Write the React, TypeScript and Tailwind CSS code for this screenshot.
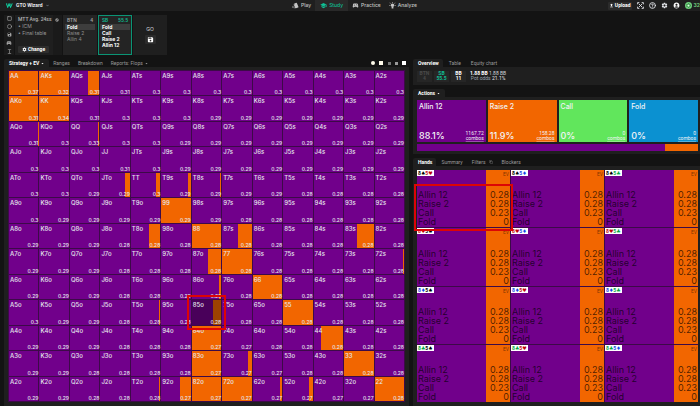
import { FC, ReactNode } from 'react';
import { Circle, CircleHelp, Copy, Square } from 'lucide-react';
import { MdAccountCircle, MdArrowDropDown, MdExpandMore, MdFileUpload, MdSave, MdSettings, MdSportsEsports, MdStyle, MdSchool, MdSwapHorizontalCircle } from 'react-icons/md';

const RANKS = 'AKQJT98765432'.split('');

// EV per hand, one line per matrix row
const EV_ROWS = [
    '.37 .32 .31 .31 .3 .3 .3 .3 .3 .3 .3 .3 .3',
    '.31 .34 .31 .3 .3 .3 .29 .29 .29 .29 .29 .29 .29',
    '.31 .3 .33 .3 .3 .29 .29 .29 .29 .29 .29 .29 .29',
    '.3 .3 .3 .31 .3 .29 .29 .29 .29 .29 .29 .29 .29',
    '.3 .3 .29 .29 .3 .29 .29 .29 .29 .28 .28 .28 .28',
    '.3 .29 .29 .29 .29 .29 .29 .28 .28 .28 .28 .28 .28',
    '.29 .29 .29 .28 .28 .28 .28 .28 .28 .28 .28 .28 .28',
    '.29 .29 .29 .28 .28 .28 .28 .28 .28 .28 .28 .28 .28',
    '.29 .29 .29 .28 .28 .28 .28 .28 .28 .28 .28 .28 .28',
    '.3 .29 .29 .28 .28 .28 .28 .28 .28 .28 .28 .28 .28',
    '.29 .29 .29 .28 .28 .28 .27 .27 .28 .28 .28 .28 .28',
    '.29 .29 .28 .28 .28 .28 .27 .27 .27 .28 .28 .28 .28',
    '.29 .29 .28 .28 .28 .27 .27 .27 .27 .27 .27 .27 .28',
].map((row) => row.split(' '));

// How often a hand raises, in percent. The rest goes all-in.
const RAISE: Record<string, number> = {
    AA: 100, AKs: 100, AQs: 40, AKo: 100, KK: 100, AQo: 3, QQ: 5,
    JTo: 18, TT: 13, T9s: 8, T8s: 3, '99': 100, T8o: 37, '88': 100, '87s': 45, '83s': 56,
    '87o': 45, '77': 100, '72s': 4, '86o': 7, '66': 100, T5o: 5, '85o': 27, '55': 100,
    '84o': 100, '44': 76, '83o': 100, '73o': 13, '33': 100, T2o: 6, '92o': 35,
    '82o': 100, '72o': 100, '62o': 7, '52o': 12, '22': 100,
};

const SELECTED = '85o';

const handName = (row: number, col: number) => {
    if (row === col) return RANKS[row] + RANKS[col];
    return row < col ? `${RANKS[row]}${RANKS[col]}s` : `${RANKS[col]}${RANKS[row]}o`;
};

const SUITS: Record<string, { glyph: string; color: string }> = {
    s: { glyph: '♠', color: 'text-black' },
    h: { glyph: '♥', color: 'text-red-700' },
    d: { glyph: '♦', color: 'text-blue-700' },
    c: { glyph: '♣', color: 'text-green-600' },
};

const COMBOS = ['sh', 'sd', 'sc', 'hs', 'hd', 'hc', 'ds', 'dh', 'dc', 'cs', 'ch', 'cd'];

const HAND_EVS = [
    ['Allin 12', '0.28'],
    ['Raise 2', '0.28'],
    ['Call', '0.23'],
    ['Fold', '0'],
];

const ACTIONS = [
    { name: 'Allin 12', share: '88.1%', combos: '1167.72', color: 'bg-[#71008b]' },
    { name: 'Raise 2', share: '11.9%', combos: '158.28', color: 'bg-[#f26600]' },
    { name: 'Call', share: '0%', combos: '0', color: 'bg-[#61e65c]' },
    { name: 'Fold', share: '0%', combos: '0', color: 'bg-[#0b91d1]' },
];

const Logo: FC = () => (
    <svg viewBox="0 0 20 14" className="h-[5px] w-[7px]" fill="none" stroke="#11c79b" strokeWidth="3">
        <path d="M1 1l4 11 4-9 4 9 5-11" />
        <path d="M6 1l3 7M12 1l2 6" strokeWidth="2" />
    </svg>
);

const BulbIcon: FC = () => (
    <svg viewBox="0 0 24 24" className="size-[7px]" fill="currentColor">
        <circle cx="12" cy="11" r="6" />
        <path d="M9 16h6v6H9zM11 0h2v3h-2zM0 10h4v2H0zM20 10h4v2h-4zM3 2l3 3-1 1-3-3zM21 2l-3 3 1 1 3-3z" />
    </svg>
);

const FullscreenIcon: FC = () => (
    <svg viewBox="0 0 24 24" className="size-[7px]" fill="none" stroke="currentColor" strokeWidth="3">
        <path d="M2 8V2h6M16 2h6v6M22 16v6h-6M8 22H2v-6M6 6l12 12M18 6L6 18" />
    </svg>
);

const ChipIcon: FC = () => (
    <svg viewBox="0 0 24 24" className="size-[7px]">
        <circle cx="12" cy="12" r="12" fill="#6fce7c" />
        <circle cx="12" cy="12" r="6" fill="none" stroke="#1d5b2a" strokeWidth="3" strokeDasharray="4 2" />
        <circle cx="12" cy="12" r="3" fill="#e6ffe9" />
    </svg>
);

const Tab: FC<{ active?: boolean; children: ReactNode }> = ({ active, children }) => (
    <button
        type="button"
        className={`flex h-2 items-center whitespace-nowrap rounded-t-[2px] pr-1 font-[Roboto,sans-serif] text-[5px] leading-[8px] ${active ? 'bg-[#1f1f1f] pl-[5px] font-bold text-white' : 'pl-1 text-[#9a9a9a]'}`}
    >
        {children}
    </button>
);

const Header: FC = () => (
    <header className="grid h-[11px] grid-cols-[1fr_auto_1fr] items-center bg-[#1f1f1f] text-[5px] text-[#c4c4c4]">
        <div className="flex items-center gap-[3px] pl-[6px]">
            <Logo />
            <button type="button" className="flex items-center gap-[2px] font-[Roboto,sans-serif] font-bold text-gray-200">
                GTO Wizard
                <MdExpandMore className="size-[5px] text-gray-400" />
            </button>
        </div>
        <nav className="flex h-full items-center pl-[9px] font-medium">
            <a href="#play" className="flex h-full items-center gap-[2px] px-1"><MdStyle className="size-[7px]" />Play</a>
            <a href="#study" className="flex h-full items-center gap-[2px] bg-[#292929] px-[5px] text-[#0fbf94]"><MdSchool className="size-[7px]" />Study</a>
            <a href="#practice" className="flex h-full items-center gap-[2px] px-1"><MdSportsEsports className="size-[7px]" />Practice</a>
            <a href="#analyze" className="flex h-full items-center gap-[2px] px-1"><BulbIcon />Analyze</a>
        </nav>
        <div className="flex items-center justify-end gap-[5px] overflow-hidden text-gray-200">
            <button type="button" className="flex h-2 items-center gap-px rounded-[1px] bg-[#2b2b2b] px-px font-[Roboto,sans-serif] font-bold text-white">
                <MdFileUpload className="size-[5px]" />Upload
            </button>
            <button type="button" aria-label="Full screen"><FullscreenIcon /></button>
            <button type="button" aria-label="Help"><CircleHelp className="size-[7px]" strokeWidth={3} /></button>
            <button type="button" aria-label="Settings"><MdSettings className="size-[7px]" /></button>
            <button type="button" aria-label="Account"><MdAccountCircle className="size-[7px] text-white" /></button>
            <div className="flex items-center gap-[2px] font-bold text-[#6fce7c]"><ChipIcon />32</div>
        </div>
    </header>
);

const SideTools: FC = () => (
    <div className="flex w-[10px] flex-col items-center justify-around bg-[#1a1a1a] text-[#a5a5a5]">
        <button type="button" aria-label="Table"><Square className="size-[5px]" strokeWidth={3} /></button>
        <button type="button" aria-label="Stacks"><Circle className="size-[5px]" strokeWidth={3} /></button>
        <button type="button" aria-label="Save"><MdSave className="size-[5px]" /></button>
        <button type="button" aria-label="Practice"><MdSportsEsports className="size-[6px]" /></button>
        <button type="button" aria-label="Height">
            <svg viewBox="0 0 24 24" className="size-[5px]" fill="none" stroke="currentColor" strokeWidth="3">
                <path d="M4 2h16M4 22h16M12 3v18" />
            </svg>
        </button>
    </div>
);

const Position: FC<{ name: string; stack: string; actions: string[]; active?: boolean }> = ({ name, stack, actions, active }) => (
    <div className={`flex w-[34px] flex-col border bg-[#242424] text-[5px] leading-[6px] ${active ? 'border-[#0b9475] font-bold text-white' : 'border-[#242424] text-[#8c8c8c]'}`}>
        <div className={`mb-px flex justify-between px-[3px] pt-px font-[Roboto,sans-serif] font-medium ${active ? 'text-[#0fbf94]' : 'text-[#a5a5a5]'}`}>
            <span>{name}</span>
            <span>{stack}</span>
        </div>
        {actions.map((action, i) => (
            <button
                key={action}
                type="button"
                className={`mx-px px-[2px] text-left ${i === 0 ? 'bg-[#3d3d3d] font-bold text-white' : ''}`}
            >
                {action}
            </button>
        ))}
    </div>
);

const SpotBar: FC = () => (
    <div className="flex h-[40px] gap-px px-1">
        <SideTools />
        <div className="flex bg-[#1f1f1f] text-[5px] leading-[7px] text-[#9a9a9a]">
            <div className="flex w-[38px] flex-col items-start whitespace-nowrap pb-[2px] pl-[3px] pt-px">
                <div className="font-[Roboto,sans-serif] font-medium text-[#b5b5b5]">MTT Avg. 24ss</div>
                <div>• ICM</div>
                <div>• Final table</div>
                <button type="button" className="mt-auto flex h-[7px] items-center gap-px rounded-[1px] bg-[#2e2e2e] px-1 font-[Roboto,sans-serif] font-bold text-white">
                    <MdSettings className="size-[5px]" />Change
                </button>
            </div>
            <div className="w-[9px] bg-[#1a1a1a] pl-[2px] pt-[3px]">
                <MdSwapHorizontalCircle className="size-[4px]" />
            </div>
        </div>
        <Position name="BTN" stack="4" actions={['Fold', 'Raise 2', 'Allin 4']} />
        <Position name="SB" stack="55.5" actions={['Fold', 'Call', 'Raise 2', 'Allin 12']} active />
        <div className="flex w-[34px] flex-col items-center justify-center gap-[3px] bg-[#1f1f1f] text-[5px] leading-[6px] text-gray-300">
            GO
            <button type="button" aria-label="Save spot" className="rounded-[1px] bg-[#2b2b2b] px-[2px] py-px text-white">
                <MdSave className="size-[7px]" />
            </button>
        </div>
    </div>
);

const MatrixCell: FC<{ row: number; col: number }> = ({ row, col }) => {
    const hand = handName(row, col);
    const selected = hand === SELECTED;
    return (
        <button type="button" className="relative flex min-h-[24px] flex-col justify-between bg-[#71008b] text-left font-medium text-gray-200">
            <span className="absolute inset-y-0 right-0 bg-[#f26600]" style={{ width: `${RAISE[hand] ?? 0}%` }} />
            {selected && <span className="absolute inset-0 bg-black/35" />}
            <span className="relative pl-px pt-[2px] text-[6px] leading-[6px]">{hand}</span>
            <span className="relative w-full text-right text-[5px] leading-[5px]">0{EV_ROWS[row][col]}</span>
            {selected && <span className="absolute -inset-[5px] z-10 border-2 border-[#dc0505]" />}
        </button>
    );
};

const StrategyPanel: FC = () => (
    <section className="flex flex-col">
        <div className="flex items-center">
            <Tab active>Strategy + EV<MdArrowDropDown className="ml-px size-[5px]" /></Tab>
            <Tab>Ranges</Tab>
            <Tab>Breakdown</Tab>
            <Tab>Reports: Flops<MdArrowDropDown className="ml-px size-[5px]" /></Tab>
            <div className="ml-auto flex items-center gap-1 pr-[3px] text-white">
                <button type="button" aria-label="Pie view" className="size-1 rounded-full bg-amber-50" />
                <button type="button" aria-label="Grid view" className="size-1 bg-amber-50" />
                <button type="button" aria-label="Small cells" className="ml-px size-[3px] bg-[#777777]" />
                <button type="button" aria-label="Medium cells" className="size-[3px] bg-[#999999]" />
                <button type="button" aria-label="Large cells" className="size-1 bg-white" />
            </div>
        </div>
        <div className="flex flex-1 flex-col bg-[#1f1f1f] px-1 pb-1 pt-[3px]">
            <div className="grid flex-1 auto-rows-fr grid-cols-13 gap-px border border-[#3c0a48] bg-[#3c0a48]">
                {RANKS.map((_, row) => RANKS.map((_, col) => <MatrixCell key={`${row}-${col}`} row={row} col={col} />))}
            </div>
        </div>
    </section>
);

const OverviewPanel: FC = () => (
    <section>
        <div className="flex gap-[2px]">
            <Tab active>Overview</Tab>
            <Tab>Table</Tab>
            <Tab>Equity chart</Tab>
        </div>
        <div className="flex h-[18px] items-center gap-[2px] bg-[#1f1f1f] px-1 text-center font-[Roboto,sans-serif] text-[5px] font-bold leading-[5px]">
            <div className="w-[15px] bg-[#262626] pb-px text-[#4a4a4a]">BTN<br />4</div>
            <div className="w-[15px] bg-[#262626] pb-px text-[#0fbf94]">SB<br />55.5</div>
            <div className="w-[15px] bg-[#262626] pb-px text-white">BB<br />11</div>
            <div className="ml-[2px] text-white">
                <div>1.88 BB <span className="font-normal text-gray-300">1.88 BB</span></div>
                <div className="font-normal text-gray-400">Pot odds <span className="text-gray-200">21.1%</span></div>
            </div>
        </div>
    </section>
);

const ActionsPanel: FC = () => (
    <section>
        <div className="flex">
            <Tab active>Actions<MdArrowDropDown className="ml-px size-[5px]" /></Tab>
        </div>
        <div className="bg-[#1f1f1f] pb-[3px] pl-1 pr-[2px] pt-[3px]">
            <div className="grid grid-cols-4 gap-[2px]">
                {ACTIONS.map((action) => (
                    <button
                        key={action.name}
                        type="button"
                        className={`flex h-[42px] flex-col justify-between px-[2px] pb-px pt-[2px] text-left text-gray-100 ${action.color}`}
                    >
                        <span className="text-[7px] font-medium leading-[9px]">{action.name}</span>
                        <span className="flex w-full items-end justify-between">
                            <span className="text-[9px] font-medium leading-[11px]">{action.share}</span>
                            <span className="text-right font-[Roboto,sans-serif] text-[5px] leading-[5px]">
                                {action.combos}<br /><span className="underline decoration-white/30">combos</span>
                            </span>
                        </span>
                    </button>
                ))}
            </div>
            <div className="mt-[2px] flex h-[7px] bg-[#f26600]">
                <div className="bg-[#71008b]" style={{ width: '88.1%' }} />
            </div>
        </div>
    </section>
);

const Card: FC<{ rank: string; suit: string }> = ({ rank, suit }) => (
    <span className={SUITS[suit].color}>
        {rank}
        <span className="font-['DejaVu_Sans']">{SUITS[suit].glyph}</span>
    </span>
);

const ComboCell: FC<{ combo: string; marked: boolean }> = ({ combo, marked }) => (
    <div className="relative flex min-h-[56px] flex-col bg-[linear-gradient(to_right,#71008b_74%,#f26600_74%)] text-black/70">
        <div className="flex items-start justify-between">
            <span className="flex h-[6px] items-center bg-white px-px font-[Roboto,sans-serif] text-[5px] font-bold leading-[6px]">
                <Card rank="8" suit={combo[0]} />
                <Card rank="5" suit={combo[1]} />
            </span>
            <span className="pr-px pt-px font-[Roboto,sans-serif] text-[5px] leading-[6px] text-black/50">EV</span>
        </div>
        <dl className="mt-auto px-px pb-px text-[9px] leading-[9px]">
            {HAND_EVS.map(([name, ev]) => (
                <div key={name} className="flex justify-between">
                    <dt>{name}</dt>
                    <dd>{ev}</dd>
                </div>
            ))}
        </dl>
        {marked && <span className="absolute -bottom-1 -left-[3px] -right-[3px] top-[14px] z-10 border-2 border-[#dc0505]" />}
    </div>
);

const HandsPanel: FC = () => (
    <section className="flex flex-1 flex-col">
        <div className="flex gap-px">
            <Tab active>Hands</Tab>
            <Tab>Summary</Tab>
            <Tab>Filters<Copy className="ml-[3px] size-[4px]" /></Tab>
            <Tab>Blockers</Tab>
        </div>
        <div className="flex flex-1 flex-col bg-[#1f1f1f] pb-1 pl-1 pr-[2px] pt-1">
            <div className="grid flex-1 auto-rows-fr grid-cols-3 gap-px bg-[#3c0a48]">
                {COMBOS.map((combo, i) => <ComboCell key={combo} combo={combo} marked={i === 0} />)}
            </div>
        </div>
    </section>
);

const App: FC = () => {
    return (
        <div className="flex min-h-screen flex-col overflow-hidden bg-[#131313] font-['Inter',sans-serif]">
            <Header />
            <div className="pb-1 pt-1">
                <SpotBar />
            </div>
            <main className="grid flex-1 grid-cols-[405fr_287fr] gap-1 pl-1">
                <StrategyPanel />
                <div className="flex flex-col gap-1">
                    <OverviewPanel />
                    <ActionsPanel />
                    <HandsPanel />
                </div>
            </main>
        </div>
    );
};

export default App;
